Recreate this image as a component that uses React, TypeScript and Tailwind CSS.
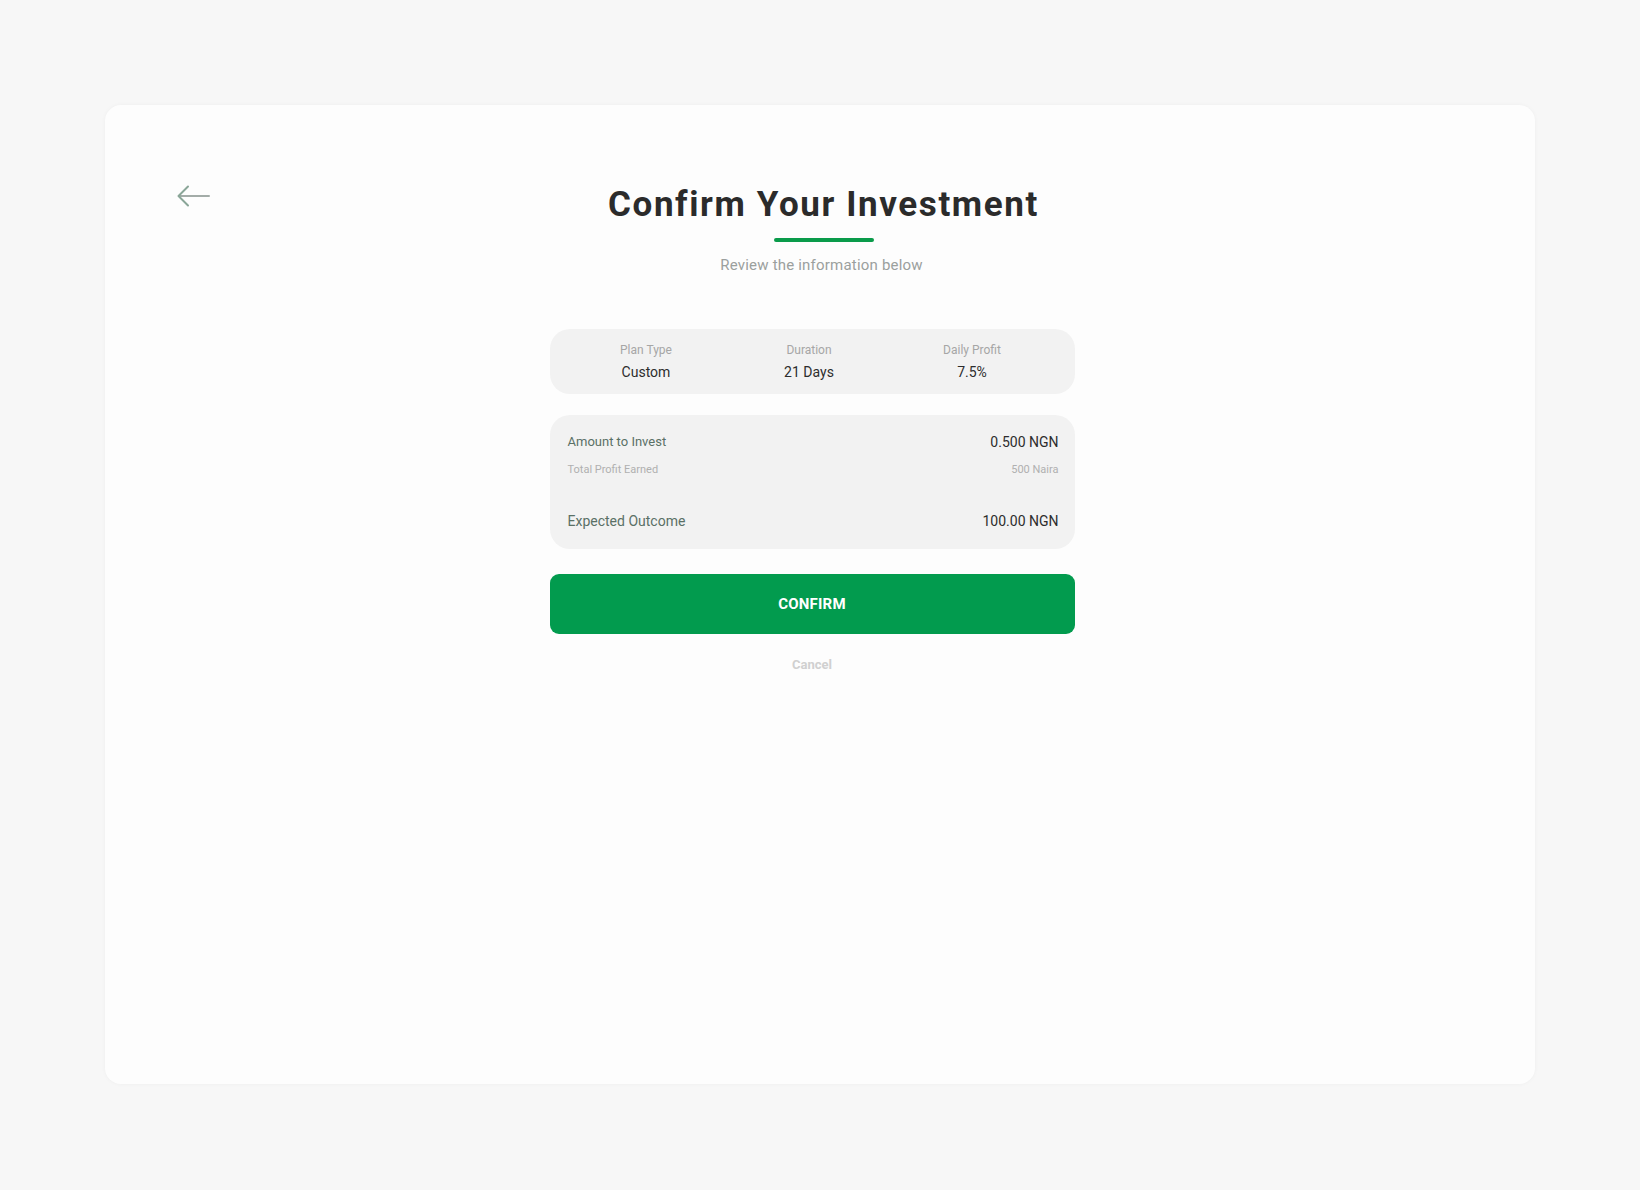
import React from "react";

const font = { fontFamily: "Roboto, 'Noto Sans', sans-serif" };

function BackArrow() {
  return (
    <svg width="33" height="22" viewBox="0 0 33 22" fill="none" aria-hidden="true">
      <path d="M32 11H2" stroke="#a3aca8" strokeWidth="2" strokeLinecap="round" />
      <path d="M11 1.5L1.5 11L11 20.5" stroke="#8aa698" strokeWidth="2" strokeLinecap="round" strokeLinejoin="round" />
    </svg>
  );
}

const plan = [
  { label: "Plan Type", value: "Custom" },
  { label: "Duration", value: "21 Days" },
  { label: "Daily Profit", value: "7.5%" },
];

export default function App() {
  return (
    <div className="min-h-[1190px] w-full bg-[#f7f7f7] p-[105px] pb-[106px] flex" style={font}>
      <div className="relative flex-1 rounded-2xl bg-[#fdfdfd] shadow-[0_0_4px_rgba(0,0,0,0.04)]">
        {/* Back */}
        <button className="absolute left-[72px] top-[80px] p-0 cursor-pointer">
          <BackArrow />
        </button>

        {/* Header */}
        <div className="flex flex-col items-center pt-[79px] pl-[7px]">
          <h1 className="text-[35px] leading-[41px] font-bold text-[#2b2b2b] tracking-[1.6px]">
            Confirm Your Investment
          </h1>
          <div className="mt-[13px] h-[4px] w-[100px] rounded-full bg-[#0a9b4a]" />
          <p className="mt-[13px] mr-[4px] text-[15px] leading-[20px] tracking-[0.2px] text-[#9ba09e]">
            Review the information below
          </p>
        </div>

        {/* Content */}
        <div className="flex justify-center pr-[16px] mt-[54px]">
          <div className="w-[525px]">
            <div className="grid grid-cols-3 rounded-[20px] bg-[#f2f2f2] pl-[15px] pr-[21px] pt-[13px] pb-[12px]">
              {plan.map((p) => (
                <div key={p.label} className="flex flex-col items-center">
                  <span className="text-[12px] leading-[16px] text-[#a6a6a6]">{p.label}</span>
                  <span className="mt-[4px] text-[14px] leading-[20px] text-[#2d2d2d]">{p.value}</span>
                </div>
              ))}
            </div>

            <div className="mt-[21px] rounded-[20px] bg-[#f2f2f2] pl-[18px] pr-[16px] pt-[17px] pb-[18px]">
              <div className="flex items-center justify-between leading-[20px]">
                <span className="text-[13px] text-[#5a7066]">Amount to Invest</span>
                <span className="text-[14px] text-[#2d2d2d]">0.500 NGN</span>
              </div>
              <div className="mt-[10px] flex justify-between text-[11px] leading-[16px] text-[#b0b0b0]">
                <span>Total Profit Earned</span>
                <span>500 Naira</span>
              </div>
              <div className="mt-[33px] flex justify-between text-[14px] leading-[20px]">
                <span className="text-[#5a7066]">Expected Outcome</span>
                <span className="text-[#2d2d2d]">100.00 NGN</span>
              </div>
            </div>

            <button className="mt-[25px] h-[60px] w-full rounded-[9px] bg-[#029b4e] text-[15px] font-bold tracking-[0.2px] text-white">
              CONFIRM
            </button>
            <div className="mt-[23px] flex justify-center">
              <button className="text-[13px] leading-[16px] font-bold text-[#d0d0d0]">Cancel</button>
            </div>
          </div>
        </div>
      </div>
    </div>
  );
}
